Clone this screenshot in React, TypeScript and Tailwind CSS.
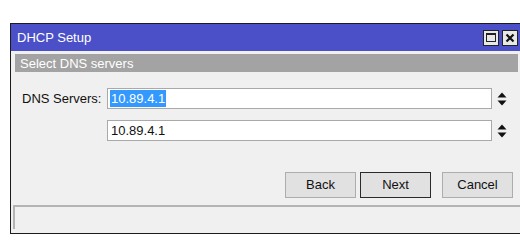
import React from "react";

function Spinner() {
  return (
    <svg width="10" height="14" viewBox="0 0 10 14" className="shrink-0">
      <path d="M5 0.5 L9.5 5.5 L0.5 5.5 Z" fill="#111" />
      <path d="M5 13.5 L9.5 8.5 L0.5 8.5 Z" fill="#111" />
    </svg>
  );
}

function DnsRow({ label, value, selected }: { label?: string; value: string; selected?: boolean }) {
  return (
    <div className="flex items-center h-[21px]">
      <div className="w-[96px] shrink-0 pl-[11px] text-[13px] text-[#111] leading-none">{label}</div>
      <div className="w-[385px] shrink-0 h-[21px] bg-white border border-[#a9a9a9] flex items-center pl-[2px]">
        {selected ? (
          <span className="bg-[#3399ff] text-white text-[13px] leading-[17px] px-[1px]">{value}</span>
        ) : (
          <span className="text-[#111] text-[13px] leading-[17px] px-[1px]">{value}</span>
        )}
      </div>
      <div className="ml-[5px] flex items-center">
        <Spinner />
      </div>
    </div>
  );
}

function Btn({ children, primary }: { children: React.ReactNode; primary?: boolean }) {
  return (
    <button
      className={
        "w-[71px] shrink-0 h-[26px] text-[13px] text-[#111] bg-[#e1e1e1] border " +
        (primary ? "border-[#2b2b2b]" : "border-[#adadad]")
      }
    >
      {children}
    </button>
  );
}

export default function App() {
  return (
    <div className="w-[520px] h-[245px] bg-white overflow-hidden flex items-start pt-[23px] pl-[10px]" style={{ fontFamily: '"Liberation Sans", Arial, sans-serif' }}>
      <div className="w-[510px] shrink-0 h-[211px] border border-r-0 border-[#1c1c1c] bg-[#f0f0f0] flex flex-col">
        <div className="h-[27px] bg-[#4b50c8] flex items-center pl-[6px] pr-[2px]">
          <span className="text-white text-[13px] leading-none flex-1">DHCP Setup</span>
          <div className="flex gap-[3px]">
            <div className="w-[16px] h-[16px] bg-[#e8e8e8] border border-[#222] flex items-center justify-center">
              <div className="w-[10px] h-[9px] border border-[#222] border-t-2" />
            </div>
            <div className="w-[16px] h-[16px] bg-[#e8e8e8] border border-[#222] flex items-center justify-center">
              <svg width="10" height="10" viewBox="0 0 10 10">
                <path d="M1.5 1.5 L8.5 8.5 M8.5 1.5 L1.5 8.5" stroke="#111" strokeWidth="2.2" />
              </svg>
            </div>
          </div>
        </div>
        <div className="mt-[3px] ml-[4px] mr-[2px] h-[18px] bg-[#a3a3a3] flex items-center pl-[5px]">
          <span className="text-white text-[13px] leading-none">Select DNS servers</span>
        </div>
        <div className="mt-[16px] flex flex-col gap-[11px]">
          <DnsRow label="DNS Servers:" value="10.89.4.1" selected />
          <DnsRow value="10.89.4.1" />
        </div>
        <div className="mt-[31px] flex justify-end pr-[7px]">
          <Btn>Back</Btn>
          <div className="w-[4px] shrink-0" />
          <Btn primary>Next</Btn>
          <div className="w-[11px] shrink-0" />
          <Btn>Cancel</Btn>
        </div>
        <div className="mt-[7px] ml-[2px] h-[24px] border-t-2 border-l-2 border-[#b4b4b4] bg-[#f0f0f0]" />
      </div>
    </div>
  );
}
